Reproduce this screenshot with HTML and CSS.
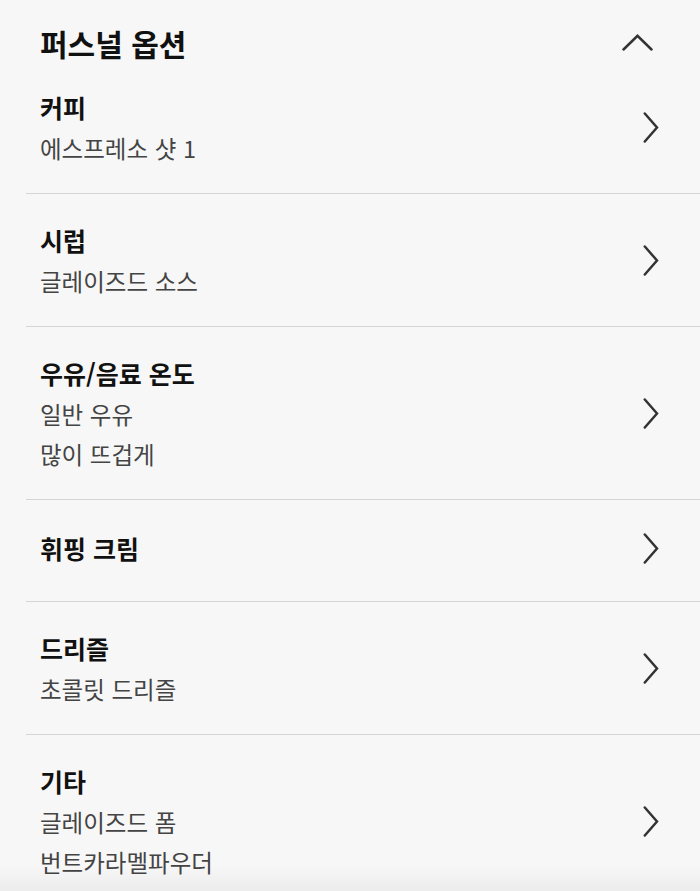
FILE: index.html
```html
<!DOCTYPE html>
<html lang="ko">
<head>
<meta charset="utf-8">
<title>퍼스널 옵션</title>
<link rel="stylesheet" href="styles.css">
</head>
<body>
<section class="panel">
  <header class="header">
    <h2 class="header-title">퍼스널 옵션</h2>
    <svg class="chev-up" width="31" height="17" viewBox="0 0 31 17" aria-hidden="true"><path d="M1.5 15.5 L15.5 1.8 L29.5 15.5"/></svg>
  </header>
  <ul class="list">
    <li class="item item--first">
      <div class="item-text">
        <div class="item-title">커피</div>
        <div class="item-sub">에스프레소 샷 1</div>
      </div>
      <svg class="chev" width="16" height="31" viewBox="0 0 16 31" aria-hidden="true"><path d="M1.8 1.5 L14 15.5 L1.8 29.5"/></svg>
    </li>
    <li class="item">
      <div class="item-text">
        <div class="item-title">시럽</div>
        <div class="item-sub">글레이즈드 소스</div>
      </div>
      <svg class="chev" width="16" height="31" viewBox="0 0 16 31" aria-hidden="true"><path d="M1.8 1.5 L14 15.5 L1.8 29.5"/></svg>
    </li>
    <li class="item">
      <div class="item-text">
        <div class="item-title">우유/음료 온도</div>
        <div class="item-sub">일반 우유</div>
        <div class="item-sub">많이 뜨겁게</div>
      </div>
      <svg class="chev" width="16" height="31" viewBox="0 0 16 31" aria-hidden="true"><path d="M1.8 1.5 L14 15.5 L1.8 29.5"/></svg>
    </li>
    <li class="item item--single">
      <div class="item-text">
        <div class="item-title">휘핑 크림</div>
      </div>
      <svg class="chev" width="16" height="31" viewBox="0 0 16 31" aria-hidden="true"><path d="M1.8 1.5 L14 15.5 L1.8 29.5"/></svg>
    </li>
    <li class="item">
      <div class="item-text">
        <div class="item-title">드리즐</div>
        <div class="item-sub">초콜릿 드리즐</div>
      </div>
      <svg class="chev" width="16" height="31" viewBox="0 0 16 31" aria-hidden="true"><path d="M1.8 1.5 L14 15.5 L1.8 29.5"/></svg>
    </li>
    <li class="item">
      <div class="item-text">
        <div class="item-title">기타</div>
        <div class="item-sub">글레이즈드 폼</div>
        <div class="item-sub">번트카라멜파우더</div>
      </div>
      <svg class="chev" width="16" height="31" viewBox="0 0 16 31" aria-hidden="true"><path d="M1.8 1.5 L14 15.5 L1.8 29.5"/></svg>
    </li>
  </ul>
</section>
<div class="bottom-shade"></div>
</body>
</html>
```

FILE: styles.css
```css
html, body {
  margin: 0;
  padding: 0;
  background: #f7f7f7;
}
body {
  font-family: "Noto Sans CJK KR", "Noto Sans", sans-serif;
  color: #111;
  overflow: hidden;
  height: 891px;
}
.panel {
  padding-left: 26px;
}
.header {
  display: flex;
  align-items: center;
  justify-content: space-between;
  padding: 25px 47px 0 14px;
  height: 36px;
}
.header-title {
  margin: 0;
  font-size: 30px;
  line-height: 36px;
  font-weight: 700;
  color: #111;
}
.chev-up path,
.chev path {
  fill: none;
  stroke: #333;
  stroke-width: 2.5;
  stroke-linecap: round;
  stroke-linejoin: miter;
}
.chev-up {
  display: block;
  margin-top: -1px;
}
.list {
  list-style: none;
  margin: 0;
  padding: 0;
}
.item {
  display: flex;
  align-items: center;
  justify-content: space-between;
  border-top: 1px solid #d5d5d5;
  padding: 25px 41px 25px 14px;
}
.item--first {
  border-top: none;
}
.item--single {
  padding-top: 27px;
  padding-bottom: 32px;
}
.item-title {
  font-size: 25px;
  line-height: 42px;
  font-weight: 700;
  color: #111;
}
.item-sub {
  font-size: 23.5px;
  line-height: 40px;
  font-weight: 400;
  color: #444;
}
.chev {
  display: block;
  flex: none;
}
.bottom-shade {
  position: fixed;
  left: 0;
  right: 0;
  bottom: 0;
  height: 26px;
  background: linear-gradient(to bottom, rgba(0,0,0,0), rgba(0,0,0,0.045));
  pointer-events: none;
}
```
